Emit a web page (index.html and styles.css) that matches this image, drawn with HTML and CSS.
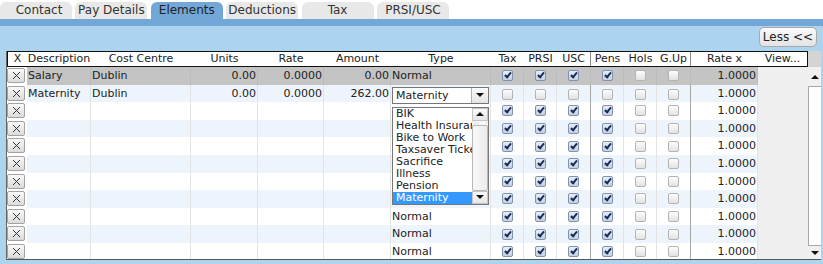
FILE: index.html
```html
<!DOCTYPE html>
<html lang="en">
<head>
    <meta charset="UTF-8">
    <title>Employee Elements</title>
    <link rel="stylesheet" href="styles.css">
</head>
<body>

    <div class="tabs">
        <div class="tab first">Contact</div>
        <div class="tab">Pay Details</div>
        <div class="tab active">Elements</div>
        <div class="tab">Deductions</div>
        <div class="tab">Tax</div>
        <div class="tab">PRSI/USC</div>
    </div>

    <div class="panel">
        <div class="toolbar">
            <button class="less-btn">Less &lt;&lt;</button>
        </div>

        <div class="grid">
            <div class="grid-head">
                <div class="head-box">
                    <div class="h">X</div>
                    <div class="h">Description</div>
                    <div class="h">Cost Centre</div>
                    <div class="h">Units</div>
                    <div class="h">Rate</div>
                    <div class="h">Amount</div>
                    <div class="h">Type</div>
                    <div class="h">Tax</div>
                    <div class="h">PRSI</div>
                    <div class="h sep">USC</div>
                    <div class="h">Pens</div>
                    <div class="h">Hols</div>
                    <div class="h sep">G.Up</div>
                    <div class="h">Rate x</div>
                    <div class="h">View...</div>
                </div>
                <div class="head-fill"></div>
            </div>

            <div class="grid-body">
                <div class="rows">
                    <!-- row 1: selected -->
                    <div class="row sel">
                        <div class="c x"><span class="del"><svg width="9" height="9" viewBox="0 0 9 9"><path d="M1 1L8 8M8 1L1 8" stroke="#333" fill="none"/></svg></span></div>
                        <div class="c">Salary</div>
                        <div class="c">Dublin</div>
                        <div class="c num">0.00</div>
                        <div class="c num">0.0000</div>
                        <div class="c num">0.00</div>
                        <div class="c">Normal</div>
                        <div class="c ck"><span class="cb on"></span></div>
                        <div class="c ck"><span class="cb on"></span></div>
                        <div class="c ck sep"><span class="cb on"></span></div>
                        <div class="c ck"><span class="cb on"></span></div>
                        <div class="c ck"><span class="cb"></span></div>
                        <div class="c ck sep"><span class="cb"></span></div>
                        <div class="c num">1.0000</div>
                        <div class="c view"></div>
                    </div>

                    <!-- row 2: editing, type dropdown open -->
                    <div class="row alt">
                        <div class="c x"><span class="del"><svg width="9" height="9" viewBox="0 0 9 9"><path d="M1 1L8 8M8 1L1 8" stroke="#333" fill="none"/></svg></span></div>
                        <div class="c">Maternity</div>
                        <div class="c">Dublin</div>
                        <div class="c num">0.00</div>
                        <div class="c num">0.0000</div>
                        <div class="c num">262.00</div>
                        <div class="c edit">
                            <div class="select">
                                <span class="select-val">Maternity</span>
                                <span class="select-btn"><i class="arr-down"></i></span>
                                <div class="listbox">
                                    <ul class="options">
                                        <li>BIK</li>
                                        <li>Health Insurance</li>
                                        <li>Bike to Work</li>
                                        <li>Taxsaver Ticket</li>
                                        <li>Sacrifice</li>
                                        <li>Illness</li>
                                        <li>Pension</li>
                                        <li class="picked">Maternity</li>
                                    </ul>
                                    <div class="list-scroll">
                                        <span class="sbtn"><i class="arr-up"></i></span>
                                        <span class="track"></span>
                                        <span class="thumb"></span>
                                        <span class="sbtn"><i class="arr-down"></i></span>
                                    </div>
                                </div>
                            </div>
                        </div>
                        <div class="c ck"><span class="cb"></span></div>
                        <div class="c ck"><span class="cb"></span></div>
                        <div class="c ck sep"><span class="cb"></span></div>
                        <div class="c ck"><span class="cb"></span></div>
                        <div class="c ck"><span class="cb"></span></div>
                        <div class="c ck sep"><span class="cb"></span></div>
                        <div class="c num">1.0000</div>
                        <div class="c view"></div>
                    </div>

                    <!-- rows 3-8: type cell hidden under the open list -->
                    <div class="row">
                        <div class="c x"><span class="del"><svg width="9" height="9" viewBox="0 0 9 9"><path d="M1 1L8 8M8 1L1 8" stroke="#333" fill="none"/></svg></span></div>
                        <div class="c"></div><div class="c"></div><div class="c num"></div><div class="c num"></div><div class="c num"></div>
                        <div class="c"></div>
                        <div class="c ck"><span class="cb on"></span></div>
                        <div class="c ck"><span class="cb on"></span></div>
                        <div class="c ck sep"><span class="cb on"></span></div>
                        <div class="c ck"><span class="cb on"></span></div>
                        <div class="c ck"><span class="cb"></span></div>
                        <div class="c ck sep"><span class="cb"></span></div>
                        <div class="c num">1.0000</div>
                        <div class="c view"></div>
                    </div>

                    <div class="row alt">
                        <div class="c x"><span class="del"><svg width="9" height="9" viewBox="0 0 9 9"><path d="M1 1L8 8M8 1L1 8" stroke="#333" fill="none"/></svg></span></div>
                        <div class="c"></div><div class="c"></div><div class="c num"></div><div class="c num"></div><div class="c num"></div>
                        <div class="c"></div>
                        <div class="c ck"><span class="cb on"></span></div>
                        <div class="c ck"><span class="cb on"></span></div>
                        <div class="c ck sep"><span class="cb on"></span></div>
                        <div class="c ck"><span class="cb on"></span></div>
                        <div class="c ck"><span class="cb"></span></div>
                        <div class="c ck sep"><span class="cb"></span></div>
                        <div class="c num">1.0000</div>
                        <div class="c view"></div>
                    </div>

                    <div class="row">
                        <div class="c x"><span class="del"><svg width="9" height="9" viewBox="0 0 9 9"><path d="M1 1L8 8M8 1L1 8" stroke="#333" fill="none"/></svg></span></div>
                        <div class="c"></div><div class="c"></div><div class="c num"></div><div class="c num"></div><div class="c num"></div>
                        <div class="c"></div>
                        <div class="c ck"><span class="cb on"></span></div>
                        <div class="c ck"><span class="cb on"></span></div>
                        <div class="c ck sep"><span class="cb on"></span></div>
                        <div class="c ck"><span class="cb on"></span></div>
                        <div class="c ck"><span class="cb"></span></div>
                        <div class="c ck sep"><span class="cb"></span></div>
                        <div class="c num">1.0000</div>
                        <div class="c view"></div>
                    </div>

                    <div class="row alt">
                        <div class="c x"><span class="del"><svg width="9" height="9" viewBox="0 0 9 9"><path d="M1 1L8 8M8 1L1 8" stroke="#333" fill="none"/></svg></span></div>
                        <div class="c"></div><div class="c"></div><div class="c num"></div><div class="c num"></div><div class="c num"></div>
                        <div class="c"></div>
                        <div class="c ck"><span class="cb on"></span></div>
                        <div class="c ck"><span class="cb on"></span></div>
                        <div class="c ck sep"><span class="cb on"></span></div>
                        <div class="c ck"><span class="cb on"></span></div>
                        <div class="c ck"><span class="cb"></span></div>
                        <div class="c ck sep"><span class="cb"></span></div>
                        <div class="c num">1.0000</div>
                        <div class="c view"></div>
                    </div>

                    <div class="row">
                        <div class="c x"><span class="del"><svg width="9" height="9" viewBox="0 0 9 9"><path d="M1 1L8 8M8 1L1 8" stroke="#333" fill="none"/></svg></span></div>
                        <div class="c"></div><div class="c"></div><div class="c num"></div><div class="c num"></div><div class="c num"></div>
                        <div class="c"></div>
                        <div class="c ck"><span class="cb on"></span></div>
                        <div class="c ck"><span class="cb on"></span></div>
                        <div class="c ck sep"><span class="cb on"></span></div>
                        <div class="c ck"><span class="cb on"></span></div>
                        <div class="c ck"><span class="cb"></span></div>
                        <div class="c ck sep"><span class="cb"></span></div>
                        <div class="c num">1.0000</div>
                        <div class="c view"></div>
                    </div>

                    <div class="row alt">
                        <div class="c x"><span class="del"><svg width="9" height="9" viewBox="0 0 9 9"><path d="M1 1L8 8M8 1L1 8" stroke="#333" fill="none"/></svg></span></div>
                        <div class="c"></div><div class="c"></div><div class="c num"></div><div class="c num"></div><div class="c num"></div>
                        <div class="c"></div>
                        <div class="c ck"><span class="cb on"></span></div>
                        <div class="c ck"><span class="cb on"></span></div>
                        <div class="c ck sep"><span class="cb on"></span></div>
                        <div class="c ck"><span class="cb on"></span></div>
                        <div class="c ck"><span class="cb"></span></div>
                        <div class="c ck sep"><span class="cb"></span></div>
                        <div class="c num">1.0000</div>
                        <div class="c view"></div>
                    </div>

                    <div class="row">
                        <div class="c x"><span class="del"><svg width="9" height="9" viewBox="0 0 9 9"><path d="M1 1L8 8M8 1L1 8" stroke="#333" fill="none"/></svg></span></div>
                        <div class="c"></div><div class="c"></div><div class="c num"></div><div class="c num"></div><div class="c num"></div>
                        <div class="c">Normal</div>
                        <div class="c ck"><span class="cb on"></span></div>
                        <div class="c ck"><span class="cb on"></span></div>
                        <div class="c ck sep"><span class="cb on"></span></div>
                        <div class="c ck"><span class="cb on"></span></div>
                        <div class="c ck"><span class="cb"></span></div>
                        <div class="c ck sep"><span class="cb"></span></div>
                        <div class="c num">1.0000</div>
                        <div class="c view"></div>
                    </div>

                    <div class="row alt">
                        <div class="c x"><span class="del"><svg width="9" height="9" viewBox="0 0 9 9"><path d="M1 1L8 8M8 1L1 8" stroke="#333" fill="none"/></svg></span></div>
                        <div class="c"></div><div class="c"></div><div class="c num"></div><div class="c num"></div><div class="c num"></div>
                        <div class="c">Normal</div>
                        <div class="c ck"><span class="cb on"></span></div>
                        <div class="c ck"><span class="cb on"></span></div>
                        <div class="c ck sep"><span class="cb on"></span></div>
                        <div class="c ck"><span class="cb on"></span></div>
                        <div class="c ck"><span class="cb"></span></div>
                        <div class="c ck sep"><span class="cb"></span></div>
                        <div class="c num">1.0000</div>
                        <div class="c view"></div>
                    </div>

                    <div class="row">
                        <div class="c x"><span class="del"><svg width="9" height="9" viewBox="0 0 9 9"><path d="M1 1L8 8M8 1L1 8" stroke="#333" fill="none"/></svg></span></div>
                        <div class="c"></div><div class="c"></div><div class="c num"></div><div class="c num"></div><div class="c num"></div>
                        <div class="c">Normal</div>
                        <div class="c ck"><span class="cb on"></span></div>
                        <div class="c ck"><span class="cb on"></span></div>
                        <div class="c ck sep"><span class="cb on"></span></div>
                        <div class="c ck"><span class="cb on"></span></div>
                        <div class="c ck"><span class="cb"></span></div>
                        <div class="c ck sep"><span class="cb"></span></div>
                        <div class="c num">1.0000</div>
                        <div class="c view"></div>
                    </div>
                </div>

                <div class="vscroll">
                    <span class="vs-up"><i class="arr-up"></i></span>
                    <span class="vs-thumb"></span>
                    <span class="vs-down"><i class="arr-down"></i></span>
                </div>
            </div>
        </div>
    </div>

</body>
</html>
```

FILE: styles.css
```css
body {
    margin: 0;
    font-family: 'DejaVu Sans', Verdana, sans-serif;
    font-size: 11px;
    color: #222;
    background: #fff;
    overflow: hidden;
}

/* tab strip */
.tabs {
    display: flex;
    align-items: flex-end;
    gap: 3.4px;
    height: 19px;
}

.tab {
    width: 72px;
    height: 17px;
    line-height: 17px;
    text-align: center;
    font-size: 12px;
    color: #333;
    background: #e8e8e8;
    border-radius: 6px 6px 0 0;
}

.tab.first {
    box-sizing: border-box;
    padding-left: 6px;
}

.tab.active {
    background: #72a7d8;
    color: #222;
}

/* blue panel */
.panel {
    border-top: 7px solid #72a7d8;
    background: #add4ef;
    height: 238px;
}

.toolbar {
    display: flex;
    justify-content: flex-end;
    align-items: flex-start;
    height: 25px;
    padding: 1px 6px 0 0;
    box-sizing: border-box;
}

.less-btn {
    width: 58px;
    height: 20px;
    padding: 0;
    font-family: 'DejaVu Sans', Verdana, sans-serif;
    font-size: 12px;
    color: #222;
    background: linear-gradient(#fbfbfb, #e3e3e3);
    border: 1px solid #a9a9a9;
    border-radius: 5px;
}

/* grid */
.grid {
    margin-left: 6px;
    width: 815px;
    border-left: 1px solid #666;
    border-bottom: 1px solid #555;
    box-sizing: border-box;
}

.grid-head {
    display: flex;
    height: 16px;
}

.head-box {
    width: 801px;
    box-sizing: border-box;
    border: 1px solid #111;
    background: #fff;
    display: grid;
    grid-template-columns: 19px 64px 100px 67px 66px 67px 100px 33px 33px 34px 33px 33px 34px 67px 49px;
}

.h {
    text-align: center;
    line-height: 14px;
    white-space: nowrap;
}

.h.sep {
    border-right: 1px solid #8a8a8a;
}

.head-fill {
    flex: 1;
    background: #d4d4d4;
}

.grid-body {
    display: flex;
    height: 192px;
    overflow: hidden;
}

.rows {
    width: 801px;
}

.row {
    display: grid;
    grid-template-columns: 20px 64px 100px 67px 66px 67px 100px 33px 33px 34px 33px 33px 34px 67px 50px;
    height: 17.6px;
    background: #fff;
}

.row.alt {
    background: #eef4fb;
}

.row.sel {
    background: #c4c4c4;
}

.c {
    box-sizing: border-box;
    border-right: 1px solid #e3e3e3;
    line-height: 17.6px;
    padding: 0 1px;
    white-space: nowrap;
    overflow: hidden;
}

.row.sel .c {
    border-right-color: #bcbcbc;
}

.c.sep {
    border-right: 1px solid #a6a6a6;
}

.c.num {
    text-align: right;
}

.c.x {
    padding: 1px 0 0 0;
    border-right: none;
    background: #fff;
}

.c.view {
    background: #efefef;
    border-right: none;
}

.c.edit {
    overflow: visible;
    position: relative;
    z-index: 2;
}

.del {
    display: flex;
    align-items: center;
    justify-content: center;
    width: 18px;
    height: 15px;
    box-sizing: border-box;
    border: 1px solid #a3a3a3;
    border-radius: 2px;
    background: linear-gradient(#fafafa, #dadada);
}

.ck {
    display: flex;
    align-items: center;
    justify-content: center;
}

.cb {
    position: relative;
    width: 9px;
    height: 9px;
    border: 1px solid #b4b4b4;
    border-radius: 2px;
    background: linear-gradient(#fdfdfd, #e2e2e2);
}

.cb.on {
    border-color: #7f93ad;
    background: linear-gradient(#e8eef6, #c3d0e1);
}

.cb.on::after {
    content: '';
    position: absolute;
    left: 3px;
    top: 0;
    width: 2px;
    height: 5px;
    border: solid #1b2b5b;
    border-width: 0 2px 2px 0;
    transform: rotate(40deg);
}

/* type dropdown */
.select {
    position: relative;
    display: flex;
    margin-top: 2px;
    width: 97px;
    height: 17px;
    box-sizing: border-box;
    border: 1px solid #777;
    background: #fff;
}

.select-val {
    flex: 1;
    line-height: 15px;
    padding-left: 3px;
    font-size: 11px;
}

.select-btn {
    width: 16px;
    display: flex;
    align-items: center;
    justify-content: center;
    background: linear-gradient(#fafafa, #e4e4e4);
    border-left: 1px solid #b0b0b0;
}

.arr-down, .arr-up {
    display: block;
    width: 0;
    height: 0;
    border-left: 4px solid transparent;
    border-right: 4px solid transparent;
}

.arr-down {
    border-top: 4px solid #111;
}

.arr-up {
    border-bottom: 4px solid #111;
}

.listbox {
    position: absolute;
    left: -1px;
    top: 19px;
    width: 97px;
    height: 98px;
    box-sizing: border-box;
    border: 1px solid #777;
    background: #fff;
    display: flex;
}

.options {
    flex: 1;
    list-style: none;
    margin: 0;
    padding: 0;
    overflow: hidden;
}

.options li {
    height: 12px;
    line-height: 12px;
    padding-left: 3px;
    white-space: nowrap;
    overflow: hidden;
}

.options li.picked {
    background: #3399ff;
    color: #fff;
}

.list-scroll {
    width: 16px;
    display: flex;
    flex-direction: column;
    background: #f4f4f4;
}

.sbtn {
    height: 13px;
    display: flex;
    align-items: center;
    justify-content: center;
    background: linear-gradient(#fafafa, #e6e6e6);
    border: 1px solid #c4c4c4;
    box-sizing: border-box;
}

.track {
    height: 4px;
    background: repeating-linear-gradient(45deg, #e8e8e8 0 1px, #fff 1px 2px);
}

.thumb {
    flex: 1;
    background: linear-gradient(90deg, #f8f8f8, #ececec);
    border: 1px solid #b8b8b8;
    border-radius: 2px;
}

/* main vertical scrollbar */
.vscroll {
    flex: 1;
    display: flex;
    flex-direction: column;
    background: #f0f0f0;
}

.vs-up {
    height: 19px;
    display: flex;
    align-items: center;
    justify-content: center;
}

.vs-thumb {
    flex: 1;
    background: #fff;
    border: 1px solid #a8a8a8;
    border-right: none;
}

.vs-down {
    height: 13px;
    display: flex;
    align-items: center;
    justify-content: center;
}
```
